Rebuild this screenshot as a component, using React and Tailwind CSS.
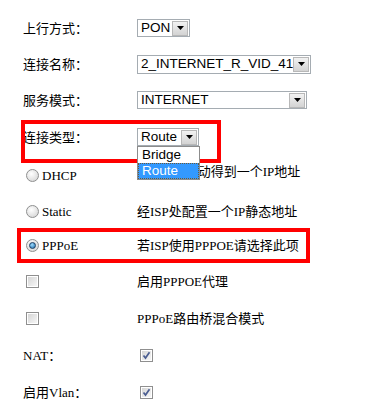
import React from "react";

const Arrow = () => (
  <svg width="7" height="4" viewBox="0 0 7 4">
    <polygon points="0,0 7,0 3.5,4" fill="#000" />
  </svg>
);

const Select = ({ value, className, children }) => (
  <div
    className={`relative flex items-center border border-[#a5acb2] bg-white font-['Liberation_Sans',Arial,sans-serif] text-[13.5px] leading-none ${className}`}
  >
    <span className="flex-1 overflow-hidden whitespace-nowrap pl-[3px]">{value}</span>
    <span className="mr-[1px] flex h-[15px] w-[16px] items-center justify-center border border-[#b8b8b8] bg-gradient-to-b from-[#f2f2f2] to-[#d3d3d3]">
      <Arrow />
    </span>
    {children}
  </div>
);

const Radio = ({ checked }) => (
  <span className="flex h-[13px] w-[13px] shrink-0 items-center justify-center rounded-full border border-[#8e8f8f] bg-[radial-gradient(circle_at_40%_35%,#ffffff,#cfcfcf)]">
    {checked && (
      <span className="h-[7px] w-[7px] rounded-full border border-[#1d3f63] bg-[radial-gradient(circle_at_40%_35%,#9fdcff,#1b6aa8)]" />
    )}
  </span>
);

const Checkbox = ({ checked }) => (
  <span className="flex h-[13px] w-[13px] shrink-0 border border-[#8f8f8f] bg-white p-[1px]">
    <span className="flex h-full w-full items-center justify-center bg-gradient-to-br from-[#d6d6d6] to-[#f6f6f6]">
      {checked && (
        <svg width="9" height="9" viewBox="0 0 9 9">
          <polyline points="1.5,4.5 3.5,7 7.5,1.2" fill="none" stroke="#4a5d91" strokeWidth="1.7" />
        </svg>
      )}
    </span>
  </span>
);

export default function App() {
  return (
    <div className="h-[408px] w-[373px] overflow-hidden bg-white pt-[10px] font-['Liberation_Serif','Noto_Sans_CJK_SC',serif] text-[13px] leading-none text-black">
      {/* 上行方式 */}
      <div className="flex h-[36px] items-center">
        <div className="w-[137px] pl-[23px]">上行方式：</div>
        <Select value="PON" className="h-[18px] w-[53px]" />
      </div>

      <div className="flex h-[36px] items-center">
        <div className="w-[137px] pl-[23px]">连接名称：</div>
        <Select value="2_INTERNET_R_VID_41" className="h-[19px] w-[174px]" />
      </div>

      <div className="flex h-[36px] items-center">
        <div className="w-[137px] pl-[23px]">服务模式：</div>
        <Select value="INTERNET" className="h-[18px] w-[170px]" />
      </div>

      {/* 连接类型 with open dropdown */}
      <div className="relative flex h-[38px] items-center">
        <div className="pointer-events-none absolute left-[21px] top-[2px] z-10 h-[43px] w-[200px] border-4 border-[#ff0000]" />
        <div className="w-[137px] pl-[23px]">连接类型：</div>
        <Select value="Route" className="h-[18px] w-[62px]">
          <div className="absolute left-[-1px] top-[17px] z-20 w-[63px] border border-[#8c8c8c] bg-white">
            <div className="flex h-[16px] items-center pl-[4px]">Bridge</div>
            <div className="flex h-[16px] items-center border border-dotted border-[#6b5a3a] bg-[#3399ff] pl-[3px] text-white">
              Route
            </div>
          </div>
        </Select>
      </div>

      <div className="flex h-[38px] items-center">
        <div className="flex w-[137px] items-center gap-[3px] pl-[26px]">
          <Radio />
          <span>DHCP</span>
        </div>
        <div className="pb-[7px]">由DHCP自动得到一个IP地址</div>
      </div>

      <div className="flex h-[34px] items-center">
        <div className="flex w-[137px] items-center gap-[3px] pl-[26px]">
          <Radio />
          <span>Static</span>
        </div>
        <div>经ISP处配置一个IP静态地址</div>
      </div>

      <div className="relative flex h-[34px] items-center">
        <div className="pointer-events-none absolute left-[17px] top-0 z-10 h-[35px] w-[293px] border-4 border-[#ff0000]" />
        <div className="flex w-[137px] items-center gap-[3px] pl-[26px]">
          <Radio checked />
          <span>PPPoE</span>
        </div>
        <div>若ISP使用PPPOE请选择此项</div>
      </div>

      <div className="flex h-[38px] items-center">
        <div className="w-[137px] pl-[26px]">
          <Checkbox />
        </div>
        <div>启用PPPOE代理</div>
      </div>

      <div className="flex h-[36px] items-center">
        <div className="w-[137px] pl-[26px]">
          <Checkbox />
        </div>
        <div>PPPoE路由桥混合模式</div>
      </div>

      <div className="flex h-[38px] items-center">
        <div className="w-[137px] pl-[23px]">NAT：</div>
        <div className="pl-[3px]">
          <Checkbox checked />
        </div>
      </div>

      <div className="flex h-[36px] items-center">
        <div className="w-[137px] pl-[23px]">启用Vlan：</div>
        <div className="pl-[3px]">
          <Checkbox checked />
        </div>
      </div>
    </div>
  );
}
